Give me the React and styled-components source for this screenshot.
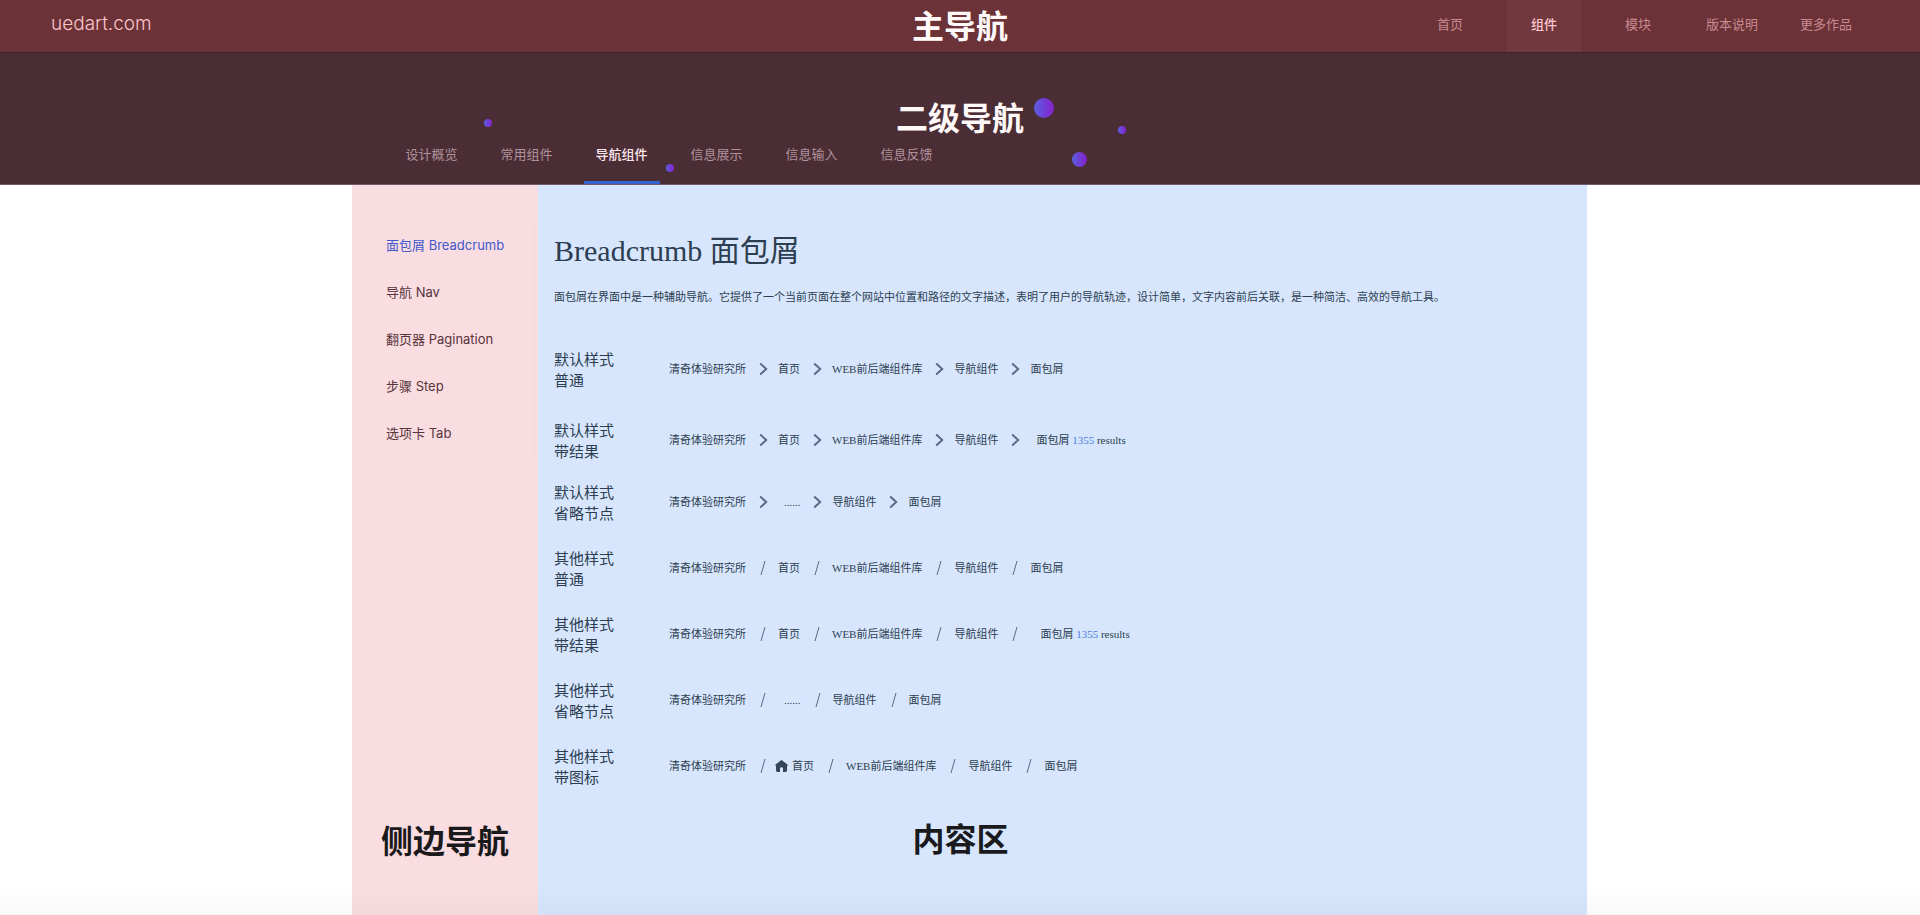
import React from 'react';
import styled, { createGlobalStyle } from 'styled-components';

const GlobalStyle = createGlobalStyle`
  * {
    box-sizing: border-box;
  }
  body {
    margin: 0;
    background-color: #ffffff;
    font-family: 'Inter', 'Noto Sans CJK SC', sans-serif;
    font-size: 13px;
  }
  a {
    color: inherit;
    text-decoration: none;
  }
  h1, h2, p, ul, ol {
    margin: 0;
    padding: 0;
    font-weight: normal;
  }
  ul, ol {
    list-style: none;
  }
`;

const Page = styled('div')`
  position: relative;
  min-height: 100vh;
  display: flex;
  flex-direction: column;
`;

const Header = styled('header')`
  height: 53px;
  display: grid;
  grid-template-columns: 1fr auto 1fr;
  background-color: #6b3238;
  border-bottom: 1px solid #451f28;
`;

const Logo = styled('a')`
  padding-left: 51px;
  line-height: 48px;
  font-size: 19px;
  font-weight: 300;
  color: #fcc4c8;
`;

const AreaTitle = styled('div')`
  font-family: 'Noto Sans CJK SC', sans-serif;
  font-size: 32px;
  line-height: 48px;
  font-weight: 700;
  text-align: center;
  color: ${props => (props.$dark ? '#1a1a1c' : '#fff8f8')};
`;

const MainNav = styled('nav')`
  display: flex;
  justify-content: flex-end;
  gap: 18px;
  padding-right: 56px;
`;

const MainNavItem = styled('a')`
  width: 76px;
  line-height: 48px;
  text-align: center;
  font-weight: ${props => (props.$active ? 500 : 400)};
  color: ${props => (props.$active ? '#ffc8ce' : '#c98990')};
  background-color: ${props => (props.$active ? '#71383e' : 'transparent')};
`;

const SubHeader = styled('div')`
  position: relative;
  height: 132px;
  padding-top: 39px;
  background-color: #4b2d35;
  border-bottom: 1px solid #6f5c68;
`;

const SubNav = styled('nav')`
  width: 100%;
  max-width: 1235px;
  margin: 4px auto 0;
  padding-left: 51px;
  display: flex;
  gap: 19px;
`;

const SubNavItem = styled('a')`
  width: 76px;
  height: 40px;
  line-height: 20px;
  text-align: center;
  font-weight: ${props => (props.$active ? 500 : 400)};
  color: ${props => (props.$active ? '#fde6ee' : '#b0929c')};
  border-bottom: 3px solid ${props => (props.$active ? '#3562cf' : 'transparent')};
`;

// floating decoration, placed from the middle of the banner
const Dot = styled('span')`
  position: absolute;
  left: calc(50% + ${props => props.$x}px);
  top: ${props => props.$y}px;
  width: ${props => props.$size}px;
  height: ${props => props.$size}px;
  border-radius: 50%;
  background: linear-gradient(90deg, #5a5fe0, #8620cc);
`;

const Body = styled('div')`
  flex: 1;
  width: 100%;
  max-width: 1254px;
  margin: 0 auto;
  padding-left: 19px;
  display: flex;
`;

const Side = styled('aside')`
  width: 186px;
  flex-shrink: 0;
  padding-top: 37px;
  background-color: #fadde0;
`;

const SideList = styled('ul')`
  margin-right: 3px;
  padding-left: 34px;
  border-right: 1px solid #f4d8dc;
`;

const SideItem = styled('li')`
  line-height: 47px;
  color: ${props => (props.$active ? '#4257cc' : '#57333c')};
`;

const Content = styled('main')`
  flex: 1;
  padding: 42px 16px 0;
  font-family: 'Liberation Serif', 'Noto Sans CJK SC', serif;
  background-color: #d7e6fd;
  color: #2c3e50;
`;

const Title = styled('h1')`
  font-size: 30px;
  line-height: 48px;
`;

const Intro = styled('p')`
  margin-top: 12px;
  font-size: 11px;
  line-height: 20px;
`;

const Demos = styled('div')`
  margin-top: 43px;
`;

const Demo = styled('section')`
  display: flex;
  align-items: center;
  margin-bottom: ${props => props.$gap || 24}px;
`;

const DemoName = styled('h2')`
  width: 115px;
  font-size: 15px;
  line-height: 21px;
`;

const Crumbs = styled('ol')`
  display: flex;
  align-items: center;
  padding-bottom: 4px;
  font-size: 11px;
  line-height: 20px;
`;

const Crumb = styled('li')`
  display: flex;
  align-items: center;
  white-space: pre;
  padding-left: ${props => props.$indent || 0}px;
`;

const Separator = styled('li')`
  width: 32px;
  padding-left: 2px;
  display: flex;
  justify-content: center;
  color: #5b6b82;
`;

const Count = styled('span')`
  color: #4a80e0;
`;

const HomeSvg = styled('svg')`
  margin: 0 4px 0 -3px;
`;

const SideTitle = styled(AreaTitle)`
  margin-top: 358px;
`;

const ContentTitle = styled(AreaTitle)`
  margin-top: 6px;
  padding-right: 204px;
`;

const BottomShade = styled('div')`
  position: absolute;
  left: 0;
  right: 0;
  bottom: 0;
  height: 28px;
  pointer-events: none;
  background: linear-gradient(rgba(0, 0, 0, 0), rgba(0, 0, 0, 0.025));
`;

const Chevron = () => (
  <svg width="9" height="14" viewBox="0 0 9 14" fill="none">
    <path d="M1.2 1.5 L7.2 7 L1.2 12.5" stroke="currentColor" strokeWidth="2" />
  </svg>
);

const Slash = () => (
  <svg width="6" height="16" viewBox="0 0 6 16" fill="none">
    <path d="M5 1 L1 15" stroke="currentColor" strokeWidth="1" />
  </svg>
);

const Home = () => (
  <HomeSvg width="13" height="12" viewBox="0 0 13 12" fill="#34465c">
    <path d="M5.7 0.4 Q6.5 -0.2 7.3 0.4 L12.4 4.6 Q13.2 5.6 12 6 V10.6 Q12 12 10.6 12 H8 V8.6 Q8 7.2 6.5 7.2 Q5 7.2 5 8.6 V12 H2.4 Q1 12 1 10.6 V6 Q-0.2 5.6 0.6 4.6 Z" />
  </HomeSvg>
);

const mainNav = ['首页', '组件', '模块', '版本说明', '更多作品'];
const subNav = ['设计概览', '常用组件', '导航组件', '信息展示', '信息输入', '信息反馈'];
const sideNav = ['面包屑 Breadcrumb', '导航 Nav', '翻页器 Pagination', '步骤 Step', '选项卡 Tab'];

const dots = [
  { x: -476, y: 66, size: 8 },
  { x: 74, y: 45, size: 20 },
  { x: 158, y: 73, size: 8 },
  { x: 112, y: 99, size: 15 },
  { x: -294, y: 111, size: 8 }
];

const root = { text: '清奇体验研究所' };
const home = { text: '首页' };
const lib = { text: 'WEB前后端组件库' };
const nav = { text: '导航组件' };
const last = { text: '面包屑' };
const more = { text: '......', indent: 6 };

const demos = [
  { name: ['默认样式', '普通'], gap: 29, items: [root, home, lib, nav, last] },
  { name: ['默认样式', '带结果'], gap: 20, items: [root, home, lib, nav, { ...last, indent: 6, count: 1355 }] },
  { name: ['默认样式', '省略节点'], items: [root, more, nav, last] },
  { name: ['其他样式', '普通'], slash: true, items: [root, home, lib, nav, last] },
  { name: ['其他样式', '带结果'], slash: true, items: [root, home, lib, nav, { ...last, indent: 10, count: 1355 }] },
  { name: ['其他样式', '省略节点'], slash: true, items: [root, more, nav, last] },
  { name: ['其他样式', '带图标'], slash: true, items: [root, { ...home, icon: true }, lib, nav, last] }
];

const Breadcrumb = ({ items, slash }) => (
  <Crumbs>
    {items.map((item, i) => (
      <React.Fragment key={item.text}>
        {i > 0 && <Separator aria-hidden="true">{slash ? <Slash /> : <Chevron />}</Separator>}
        <Crumb $indent={item.indent}>
          {item.icon && <Home />}
          {i < items.length - 1 ? <a href="#">{item.text}</a> : <span>{item.text}</span>}
          {item.count && (
            <span>
              {' '}
              <Count>{item.count}</Count> results
            </span>
          )}
        </Crumb>
      </React.Fragment>
    ))}
  </Crumbs>
);

const App = () => {
  return (
    <Page>
      <GlobalStyle />
      <Header>
        <Logo href="#">uedart.com</Logo>
        <AreaTitle>主导航</AreaTitle>
        <MainNav>
          {mainNav.map(text => (
            <MainNavItem key={text} href="#" $active={text === '组件'}>
              {text}
            </MainNavItem>
          ))}
        </MainNav>
      </Header>
      <SubHeader>
        {dots.map(dot => (
          <Dot key={dot.x} $x={dot.x} $y={dot.y} $size={dot.size} />
        ))}
        <AreaTitle>二级导航</AreaTitle>
        <SubNav>
          {subNav.map(text => (
            <SubNavItem key={text} href="#" $active={text === '导航组件'}>
              {text}
            </SubNavItem>
          ))}
        </SubNav>
      </SubHeader>
      <Body>
        <Side>
          <SideList>
            {sideNav.map((text, i) => (
              <SideItem key={text} $active={i === 0}>
                <a href="#">{text}</a>
              </SideItem>
            ))}
          </SideList>
          <SideTitle $dark>侧边导航</SideTitle>
        </Side>
        <Content>
          <Title>Breadcrumb 面包屑</Title>
          <Intro>
            面包屑在界面中是一种辅助导航。它提供了一个当前页面在整个网站中位置和路径的文字描述，表明了用户的导航轨迹，设计简单，文字内容前后关联，是一种简洁、高效的导航工具。
          </Intro>
          <Demos>
            {demos.map(demo => (
              <Demo key={demo.name.join()} $gap={demo.gap}>
                <DemoName>
                  {demo.name[0]}
                  <br />
                  {demo.name[1]}
                </DemoName>
                <Breadcrumb items={demo.items} slash={demo.slash} />
              </Demo>
            ))}
          </Demos>
          <ContentTitle $dark>内容区</ContentTitle>
        </Content>
      </Body>
      <BottomShade />
    </Page>
  );
};

export default App;
